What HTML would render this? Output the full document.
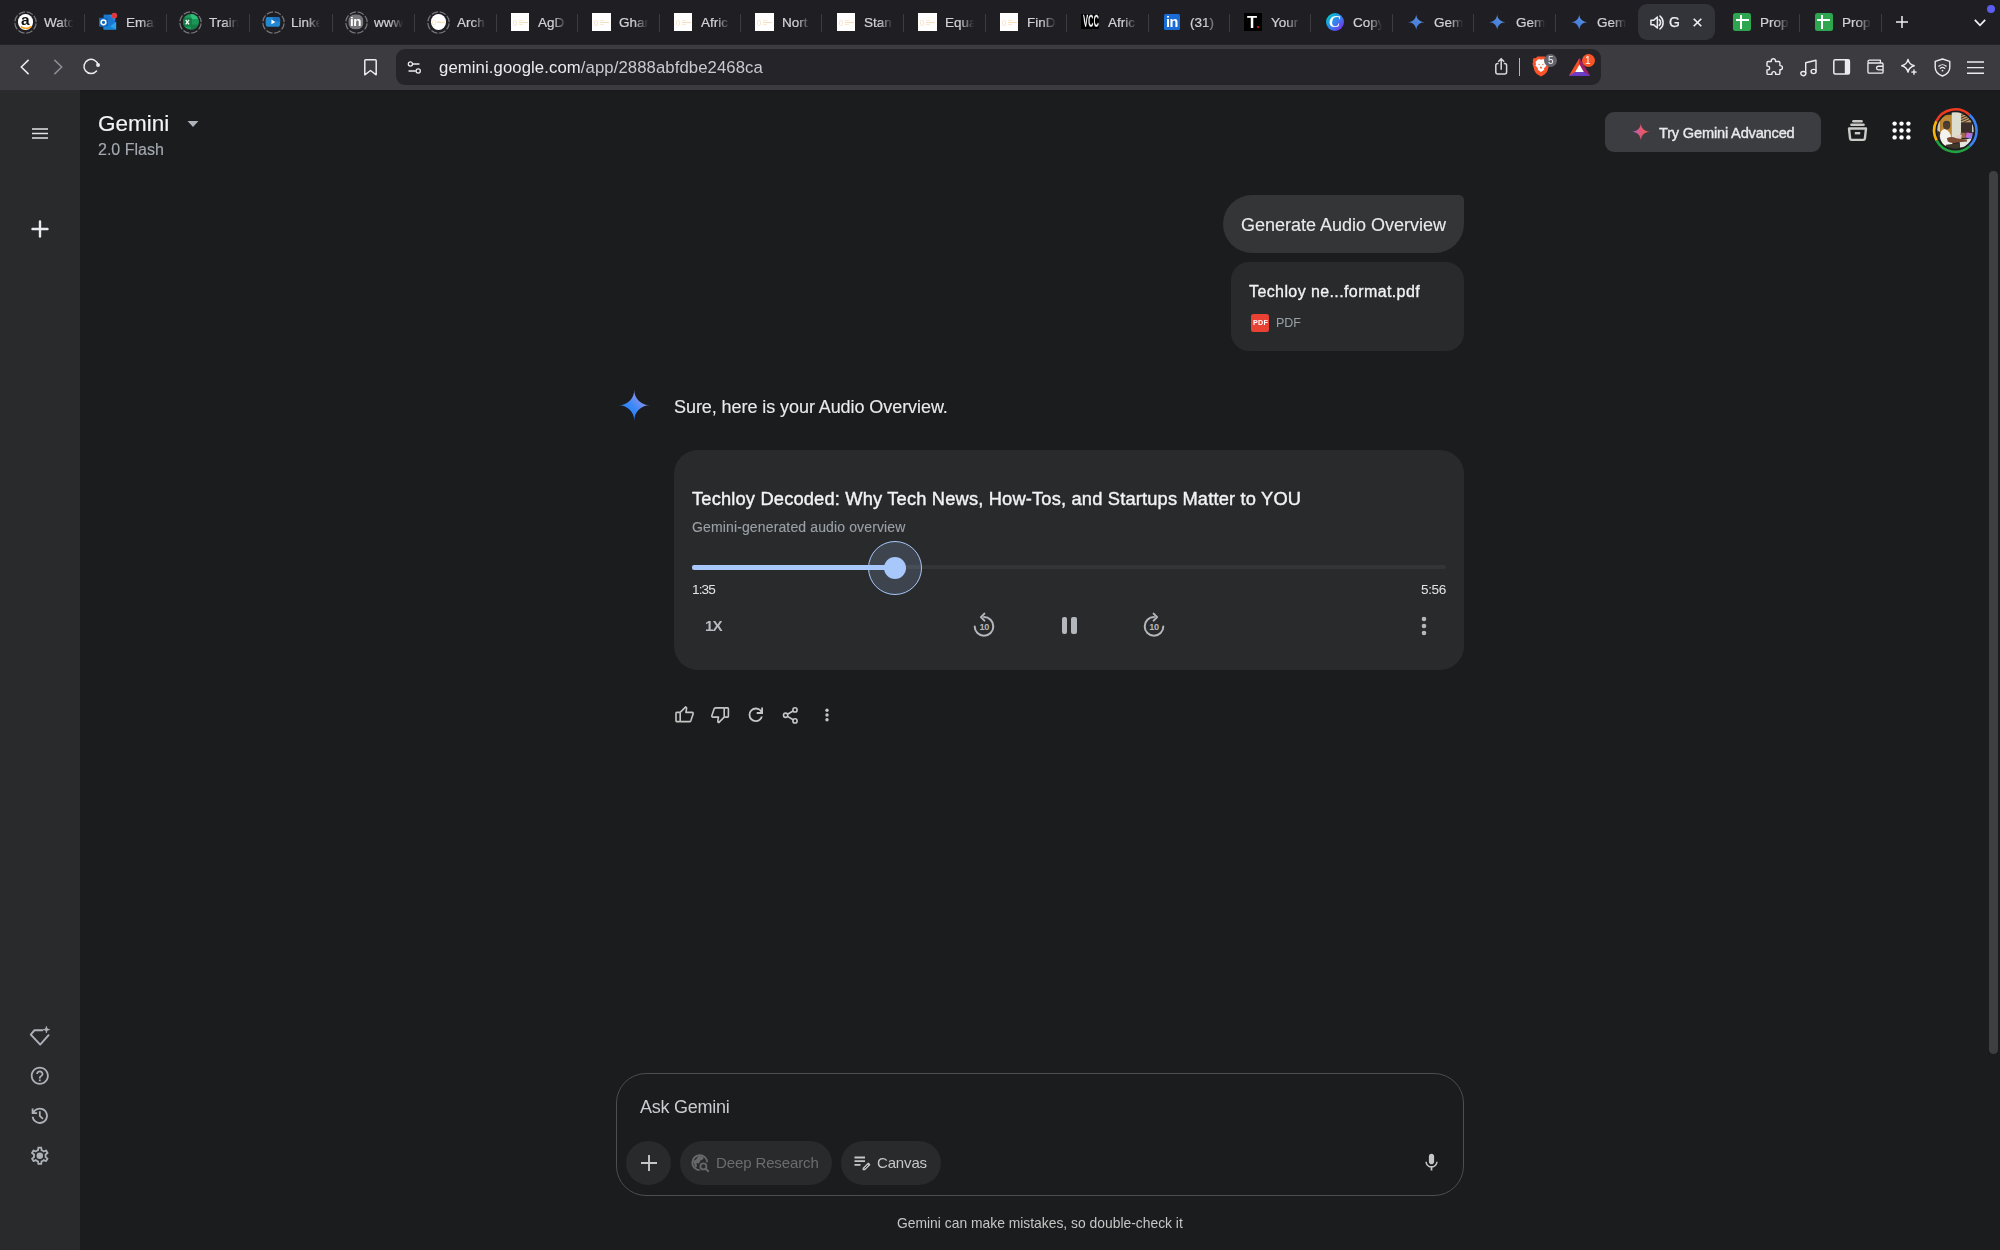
<!DOCTYPE html>
<html><head><meta charset="utf-8"><title>Gemini</title><style>
*{box-sizing:border-box;margin:0;padding:0}
html,body{width:2000px;height:1250px;overflow:hidden;background:#1b1c1d;font-family:"Liberation Sans",sans-serif;}
.abs{position:absolute}
.t{position:absolute;white-space:nowrap;line-height:1;will-change:transform}
#tabbar{position:absolute;left:0;top:0;width:2000px;height:45px;background:#1e1e23}
#toolbar{position:absolute;left:0;top:44px;width:2000px;height:46px;box-shadow:inset 0 0.7px 0 #1e1e23;background:#3b3b40}
#urlbar{position:absolute;left:396.2px;top:4.9px;width:1205.1px;height:36px;border-radius:9px;background:#242429}
.sep{position:absolute;top:14px;width:1.4px;height:17.6px;background:#3c3c43}
.tabtxt{will-change:transform;position:absolute;top:14.8px;font-size:13.5px;line-height:15px;color:#d2d2d6;-webkit-text-stroke:0.22px #d2d2d6;white-space:nowrap;overflow:hidden;width:29.5px;
 -webkit-mask-image:linear-gradient(90deg,#000 50%,transparent 98%);mask-image:linear-gradient(90deg,#000 50%,transparent 98%)}
.fav{position:absolute;top:14px;width:16px;height:16px}
.ring{position:absolute;top:11px;width:22px;height:22px;border-radius:50%;border:1.2px dashed #77777f}
#side{position:absolute;left:0;top:90px;width:80.300px;height:1160px;background:#282a2c}
svg{position:absolute;overflow:visible}
</style></head><body>
<div id="w" style="position:absolute;left:0;top:0;width:2000px;height:1250px;transform:translateZ(0)">
<!-- ===== GEMINI PAGE ===== -->
<div id="side"></div>
<div class="abs" style="left:80px;top:90px;width:1920px;height:2px;background:linear-gradient(180deg,rgba(0,0,0,.10),rgba(0,0,0,0))"></div>
<!-- sidebar top icons -->
<svg style="left:32px;top:127.500px" width="16" height="11" viewBox="0 0 16 11"><path d="M0 1H16M0 5.500H16M0 10H16" stroke="#e3e3e3" stroke-width="1.700"/></svg>
<svg style="left:32px;top:221px" width="16" height="16" viewBox="0 0 16 16"><path d="M8 0.500V15.500M0.500 8H15.500" stroke="#e8eaed" stroke-width="2.400" stroke-linecap="round"/></svg>
<!-- sidebar bottom icons -->
<svg style="left:29px;top:1025px" width="22" height="22" viewBox="0 0 22 22"><path d="M13.300 5.200H5.500L1.800 9.600L11.200 19.600L19.600 10.200" fill="none" stroke="#aeb2b8" stroke-width="1.900" stroke-linejoin="round" stroke-linecap="round"/><path d="M17.400 1.400C17.700 3.600 18.400 4.300 20.600 4.600C18.400 4.900 17.700 5.600 17.400 7.800C17.100 5.600 16.400 4.900 14.200 4.600C16.400 4.300 17.100 3.600 17.400 1.400Z" fill="#aeb2b8" stroke="#aeb2b8" stroke-width="0.900" stroke-linejoin="round"/></svg>
<svg style="left:29.400px;top:1065px" width="21.600" height="21.600" viewBox="0 0 24 24"><path fill="#aeb2b8" d="M11 18h2v-2h-2v2zm1-16C6.480 2 2 6.480 2 12s4.480 10 10 10 10-4.480 10-10S17.520 2 12 2zm0 18c-4.410 0-8-3.590-8-8s3.590-8 8-8 8 3.590 8 8-3.590 8-8 8zm0-14c-2.210 0-4 1.790-4 4h2c0-1.100.9-2 2-2s2 .9 2 2c0 2-3 1.750-3 5h2c0-2.250 3-2.500 3-5 0-2.210-1.790-4-4-4z"/></svg>
<svg style="left:29.400px;top:1105.200px" width="21.600" height="21.600" viewBox="0 0 24 24"><path fill="#aeb2b8" d="M12 21q-3.450 0-6.012-2.287T3.050 13H5.100q.35 2.600 2.313 4.300T12 19q2.925 0 4.963-2.037T19 12t-2.037-4.963T12 5q-1.725 0-3.225.800T6.250 8H9v2H3V4h2v2.350q1.275-1.600 3.113-2.475T12 3q1.875 0 3.513.713t2.850 1.924 1.925 2.850T21 12t-.712 3.513-1.925 2.850-2.850 1.925T12 21m2.800-4.800L11 12.400V7h2v4.600l3.200 3.200z"/></svg>
<svg style="left:29.200px;top:1145.200px" width="21.600" height="21.600" viewBox="0 0 24 24"><path fill="#aeb2b8" d="M19.430 12.980c.04-.32.07-.64.07-.98 0-.34-.03-.66-.07-.98l2.110-1.650c.19-.15.24-.42.12-.64l-2-3.460c-.09-.16-.26-.25-.44-.25-.06 0-.12.010-.17.030l-2.490 1c-.52-.4-1.080-.73-1.690-.98l-.38-2.650C14.460 2.180 14.250 2 14 2h-4c-.25 0-.46.180-.49.420l-.38 2.650c-.61.250-1.170.59-1.690.98l-2.490-1c-.06-.02-.12-.03-.18-.03-.17 0-.34.090-.43.250l-2 3.460c-.13.220-.07.49.12.640l2.110 1.650c-.04.320-.07.650-.07.980 0 .33.030.66.070.98l-2.110 1.650c-.19.150-.24.420-.12.640l2 3.460c.09.160.26.250.44.250.06 0 .12-.01.17-.03l2.490-1c.52.4 1.080.73 1.690.98l.38 2.650c.03.240.24.420.49.420h4c.25 0 .46-.18.490-.42l.38-2.650c.61-.25 1.170-.59 1.690-.98l2.490 1c.06.020.12.030.18.030.17 0 .34-.09.430-.25l2-3.460c.12-.22.07-.49-.12-.64l-2.110-1.650zm-1.980-1.710c.04.310.05.520.05.730 0 .21-.02.430-.05.730l-.14 1.130.89.700 1.080.84-.7 1.210-1.270-.51-1.040-.42-.9.680c-.43.320-.84.560-1.250.73l-1.060.43-.16 1.130-.2 1.350h-1.400l-.19-1.350-.16-1.130-1.060-.43c-.43-.18-.83-.41-1.230-.71l-.91-.7-1.060.43-1.270.51-.7-1.210 1.080-.84.890-.7-.14-1.130c-.03-.31-.05-.54-.05-.74s.02-.43.050-.73l.14-1.130-.89-.7-1.080-.84.700-1.210 1.270.51 1.040.42.900-.68c.43-.32.840-.56 1.250-.73l1.060-.43.16-1.130.2-1.350h1.390l.19 1.350.16 1.130 1.060.43c.43.180.83.410 1.230.71l.91.7 1.060-.43 1.270-.51.700 1.210-1.070.85-.89.700.14 1.130z"/><circle cx="12" cy="12" r="3.600" fill="#aeb2b8"/></svg>

<!-- header -->
<div class="t" id="h_gemini" style="-webkit-text-stroke:0.150px #f2f4f6;left:97.500px;top:113.200px;font-size:22.500px;color:#f2f4f6">Gemini</div>
<svg style="left:187px;top:120.800px" width="12" height="6" viewBox="0 0 12 6"><path d="M0.500 0H11.500L6 6Z" fill="#adb2bb"/></svg>
<div class="t" id="h_flash" style="left:98px;top:142.200px;font-size:16px;color:#a4a9b2;-webkit-text-stroke:0.150px #a4a9b2">2.0 Flash</div>

<div class="abs" style="left:1605px;top:111.500px;width:216.300px;height:40.300px;border-radius:9px;background:#3c3d41"></div>
<svg style="left:1631.600px;top:122.800px" width="17.600" height="17.600" viewBox="0 0 28 28"><defs><linearGradient id="advg" x1="0" y1="0.500" x2="1" y2="0.500"><stop offset="0" stop-color="#a66bd8"/><stop offset="0.450" stop-color="#e0567a"/><stop offset="1" stop-color="#f0604a"/></linearGradient></defs><path d="M14 28C14 26.063 13.627 24.243 12.880 22.540C12.157 20.837 11.165 19.355 9.905 18.095C8.645 16.835 7.163 15.843 5.460 15.120C3.757 14.373 1.937 14 0 14C1.937 14 3.757 13.638 5.460 12.915C7.163 12.168 8.645 11.165 9.905 9.905C11.165 8.645 12.157 7.163 12.880 5.460C13.627 3.757 14 1.937 14 0C14 1.937 14.362 3.757 15.085 5.460C15.832 7.163 16.835 8.645 18.095 9.905C19.355 11.165 20.837 12.168 22.540 12.915C24.243 13.638 26.063 14 28 14C26.063 14 24.243 14.373 22.540 15.120C20.837 15.843 19.355 16.835 18.095 18.095C16.835 19.355 15.832 20.837 15.085 22.540C14.362 24.243 14 26.063 14 28Z" fill="url(#advg)"/></svg>
<div class="t" id="h_adv" style="left:1658.500px;top:125.500px;font-size:14.600px;letter-spacing:-0.180px;color:#e8eaed;-webkit-text-stroke:0.380px #e8eaed">Try Gemini Advanced</div>

<!-- gem manager icon -->
<svg style="left:1846.500px;top:119.500px" width="21" height="22" viewBox="0 0 21 22"><g stroke="#cacac6" stroke-width="2.400" fill="none" stroke-linejoin="round"><path d="M6.400 1.300H14.600" stroke-linecap="round"/><path d="M4.400 4.800H16.600" stroke-linecap="round"/><path d="M2 8.500H19L17.900 18.500a1.600 1.600 0 0 1-1.600 1.400H4.700a1.600 1.600 0 0 1-1.600-1.400Z"/><path d="M7.800 13.200H13.200"/></g></svg>
<!-- apps -->
<svg style="left:1892px;top:121.300px" width="19" height="19" viewBox="0 0 19 19"><g fill="#fff"><circle cx="2.600" cy="2.600" r="2.200"/><circle cx="9.500" cy="2.600" r="2.200"/><circle cx="16.400" cy="2.600" r="2.200"/><circle cx="2.600" cy="9.500" r="2.200"/><circle cx="9.500" cy="9.500" r="2.200"/><circle cx="16.400" cy="9.500" r="2.200"/><circle cx="2.600" cy="16.400" r="2.200"/><circle cx="9.500" cy="16.400" r="2.200"/><circle cx="16.400" cy="16.400" r="2.200"/></g></svg>
<!-- avatar -->
<svg style="left:1920px;top:100px" width="70" height="65" viewBox="0 0 1346 1250">
<defs><clipPath id="avc"><circle cx="680" cy="588" r="352"/></clipPath><filter id="avb" x="-5%" y="-5%" width="110%" height="110%"><feGaussianBlur stdDeviation="7"/></filter>
<linearGradient id="avl" x1="0" y1="0" x2="1" y2="1"><stop offset="0" stop-color="#ff5aa8"/><stop offset="0.5" stop-color="#b070e8"/><stop offset="1" stop-color="#58a0f0"/></linearGradient></defs>
<g fill="none" stroke-width="50">
<path d="M314.200 407.200A408 408 0 0 1 949.800 282" stroke="#ee3a22"/>
<path d="M949.800 282A408 408 0 0 1 951.900 892.200" stroke="#3d82f4"/>
<path d="M951.900 892.200A408 408 0 0 1 317.800 775.800" stroke="#23a341"/>
<path d="M317.800 775.800A408 408 0 0 1 314.200 407.200" stroke="#fbb506"/>
</g>
<g clip-path="url(#avc)"><g filter="url(#avb)">
<rect x="300" y="200" width="780" height="780" fill="#2b2622"/>
<rect x="330" y="400" width="60" height="220" fill="#c8c8c0"/>
<rect x="385" y="285" width="230" height="450" fill="#b5802c"/>
<rect x="415" y="320" width="170" height="380" fill="#c08a34"/>
<rect x="610" y="225" width="185" height="560" fill="#dcdccf"/>
<rect x="790" y="240" width="200" height="200" fill="#c6a270"/>
<path d="M790 300L900 250M790 350L960 275M790 400L985 315M830 430L990 362" stroke="#4a3826" stroke-width="20"/>
<rect x="790" y="430" width="225" height="200" fill="#3a2f29"/>
<rect x="1000" y="470" width="40" height="150" fill="#c9c9c9"/>
<path d="M760 770L1000 740L960 900L770 915Z" fill="#e6e4e0"/>
<path d="M895 625L1015 640L995 755L880 720Z" fill="url(#avl)"/>
<rect x="780" y="630" width="100" height="100" fill="#9a6a50"/>
<path d="M700 680L800 670L800 720L700 720Z" fill="#e8c8c8"/>
<path d="M330 580Q420 620 470 780L520 900L330 900Z" fill="#3a312b"/>
<ellipse cx="512" cy="485" rx="70" ry="82" fill="#4f3d32"/>
<path d="M442 470Q450 400 512 400Q575 400 582 460Q540 430 490 440Q460 450 442 470Z" fill="#3c3a38"/>
<path d="M380 690Q395 570 470 558Q545 575 585 660L625 850L470 885Q395 800 380 690Z" fill="#f3f3ef"/>
<path d="M515 735Q600 690 700 735L905 765L905 800L700 815Q590 840 535 800Z" fill="#7c4a32"/>
<path d="M500 860L760 830L770 930L520 940Z" fill="#40342c"/>
</g></g></svg>
<!-- scrollbar -->
<div class="abs" style="left:1989px;top:170.800px;width:8.800px;height:883.200px;border-radius:4.400px;background:#3e3f42"></div>

<!-- user bubble -->
<div class="abs" style="left:1223px;top:195px;width:241px;height:58px;border-radius:29px 5px 29px 29px;background:#333537"></div>
<div class="t" id="u_gen" style="-webkit-text-stroke:0.130px #e8eaed;left:1241px;top:215.500px;font-size:18px;color:#e8eaed">Generate Audio Overview</div>
<!-- file chip -->
<div class="abs" style="left:1231px;top:262px;width:233px;height:89px;border-radius:18px;background:#282a2c"></div>
<div class="t" id="u_file" style="left:1249px;top:283.600px;font-size:16px;letter-spacing:0.400px;color:#f1f3f4;-webkit-text-stroke:0.330px #f1f3f4">Techloy ne...format.pdf</div>
<div class="abs" style="left:1251px;top:313.500px;width:18px;height:18px;border-radius:2.500px;background:#e94235"></div>
<div class="t" style="left:1253.200px;top:319.300px;font-size:7.200px;font-weight:bold;color:#fff;letter-spacing:0.250px">PDF</div>
<div class="t" id="u_pdf" style="left:1276px;top:316.800px;font-size:12.500px;color:#9aa0a6">PDF</div>

<!-- gemini response -->
<svg style="left:618.700px;top:389.800px" width="30.500" height="30.500" viewBox="0 0 28 28"><defs><linearGradient id="gsp" x1="0.120" y1="0.880" x2="0.880" y2="0.120"><stop offset="0" stop-color="#1f7cfb"/><stop offset="0.450" stop-color="#3a8af9"/><stop offset="0.750" stop-color="#7f8ff0"/><stop offset="1" stop-color="#b08ae8"/></linearGradient></defs><path d="M14 28C14 26.063 13.627 24.243 12.880 22.540C12.157 20.837 11.165 19.355 9.905 18.095C8.645 16.835 7.163 15.843 5.460 15.120C3.757 14.373 1.937 14 0 14C1.937 14 3.757 13.638 5.460 12.915C7.163 12.168 8.645 11.165 9.905 9.905C11.165 8.645 12.157 7.163 12.880 5.460C13.627 3.757 14 1.937 14 0C14 1.937 14.362 3.757 15.085 5.460C15.832 7.163 16.835 8.645 18.095 9.905C19.355 11.165 20.837 12.168 22.540 12.915C24.243 13.638 26.063 14 28 14C26.063 14 24.243 14.373 22.540 15.120C20.837 15.843 19.355 16.835 18.095 18.095C16.835 19.355 15.832 20.837 15.085 22.540C14.362 24.243 14 26.063 14 28Z" fill="url(#gsp)"/></svg>
<div class="t" id="r_sure" style="-webkit-text-stroke:0.130px #e8eaed;left:674px;top:398.100px;font-size:18px;letter-spacing:-0.070px;color:#e8eaed">Sure, here is your Audio Overview.</div>

<!-- audio card -->
<div class="abs" style="left:674px;top:450px;width:790px;height:220px;border-radius:24px;background:#282a2c"></div>
<div class="t" id="c_title" style="left:692px;top:490.400px;font-size:18.300px;letter-spacing:0.170px;color:#f1f3f4;-webkit-text-stroke:0.400px #f1f3f4">Techloy Decoded: Why Tech News, How-Tos, and Startups Matter to YOU</div>
<div class="t" id="c_sub" style="-webkit-text-stroke:0.120px #9aa0a6;left:692px;top:520px;font-size:14px;letter-spacing:0.135px;color:#9aa0a6">Gemini-generated audio overview</div>
<div class="abs" style="left:692px;top:565px;width:754px;height:4px;border-radius:2px;background:#333537"></div>
<div class="abs" style="left:692px;top:565px;width:203px;height:4.500px;border-radius:2px;background:#a8c7fa"></div>
<div class="abs" style="left:868.100px;top:540.500px;width:54.200px;height:54.200px;border-radius:50%;background:rgba(168,199,250,0.170);border:1.200px solid #a8c7fa"></div>
<div class="abs" style="left:884.100px;top:556.500px;width:22.200px;height:22.200px;border-radius:50%;background:#a8c7fa"></div>
<div class="t" id="c_t1" style="left:692px;top:582.800px;font-size:13.600px;letter-spacing:-0.870px;color:#e3e3e3">1:35</div>
<div class="t" id="c_t2" style="left:1420.700px;top:582.800px;font-size:13.600px;letter-spacing:-0.370px;color:#e3e3e3">5:56</div>
<div class="t" id="c_1x" style="left:704.700px;top:618.200px;font-size:15.200px;font-weight:bold;letter-spacing:-0.850px;color:#b8bcc2">1X</div>
<!-- replay 10 -->
<svg style="left:972.400px;top:612.200px" width="24" height="26" viewBox="0 0 24 26"><path d="M12 5.100A9.300 9.300 0 1 1 2.700 14.400" fill="none" stroke="#b4b8bd" stroke-width="2" stroke-linecap="round"/><path d="M12.400 1.600L8.900 5.100L12.400 8.600" fill="none" stroke="#b4b8bd" stroke-width="2" stroke-linejoin="round" stroke-linecap="round"/><text x="12.300" y="18" font-family="Liberation Sans, sans-serif" font-size="9.200" font-weight="bold" fill="#b4b8bd" text-anchor="middle" letter-spacing="-0.4">10</text></svg>
<!-- pause -->
<div class="abs" style="left:1061.500px;top:617px;width:5.500px;height:17px;border-radius:2px;background:#b4b8bd"></div>
<div class="abs" style="left:1071px;top:617px;width:5.500px;height:17px;border-radius:2px;background:#b4b8bd"></div>
<!-- forward 10 -->
<svg style="left:1141.600px;top:612.200px" width="24" height="26" viewBox="0 0 24 26"><path d="M12 5.100A9.300 9.300 0 1 0 21.300 14.400" fill="none" stroke="#b4b8bd" stroke-width="2" stroke-linecap="round"/><path d="M11.600 1.600L15.100 5.100L11.600 8.600" fill="none" stroke="#b4b8bd" stroke-width="2" stroke-linejoin="round" stroke-linecap="round"/><text x="11.900" y="18" font-family="Liberation Sans, sans-serif" font-size="9.200" font-weight="bold" fill="#b4b8bd" text-anchor="middle" letter-spacing="-0.4">10</text></svg>
<!-- more -->
<svg style="left:1421px;top:615.800px" width="6" height="20" viewBox="0 0 6 20"><g fill="#b4b8bd"><circle cx="3" cy="3" r="2.300"/><circle cx="3" cy="10" r="2.300"/><circle cx="3" cy="17" r="2.300"/></g></svg>

<!-- action row -->
<svg style="left:674.500px;top:706.300px" width="20" height="17" viewBox="0 0 20 17"><g fill="none" stroke="#c4c7c5" stroke-width="1.600" stroke-linejoin="round"><rect x="1" y="6.400" width="4.200" height="9.200" rx="0.800"/><path d="M5.200 6.400L10.700 0.900Q11.900 1.300 11.600 2.700L10.900 6.400H17.200Q18.500 6.600 18.100 7.900L15.900 14.600Q15.500 15.600 14.500 15.600H5.200"/></g></svg>
<svg style="left:710.700px;top:707.200px" width="20" height="17" viewBox="0 0 20 17"><g fill="none" stroke="#c4c7c5" stroke-width="1.600" stroke-linejoin="round"><rect x="13.200" y="0.900" width="4.200" height="9.200" rx="0.800"/><path d="M13.200 10.100L7.700 15.600Q6.500 15.200 6.800 13.800L7.500 10.100H1.800Q0.500 9.900 0.900 8.600L3.100 1.900Q3.500 0.900 4.500 0.900H13.200"/></g></svg>
<svg style="left:744.600px;top:704.100px" width="21.600" height="21.600" viewBox="0 0 24 24"><path fill="#c4c7c5" d="M12 20q-3.350 0-5.675-2.325T4 12t2.325-5.675T12 4q1.725 0 3.300.712T18 6.750V4h2v7h-7V9h4.200q-.8-1.400-2.187-2.200T12 6Q9.500 6 7.750 7.750T6 12t1.750 4.250T12 18q1.925 0 3.475-1.100T17.650 14h2.100q-.7 2.650-2.850 4.325T12 20"/></svg>
<svg style="left:782px;top:705.500px" width="18" height="19" viewBox="0 0 18 19"><g fill="none" stroke="#c4c7c5" stroke-width="1.600"><circle cx="13" cy="3.900" r="2.100"/><circle cx="3.600" cy="9.250" r="2.100"/><circle cx="13" cy="14.900" r="2.100"/><path d="M5.500 8.200L11.100 5M5.500 10.400L11.100 13.700"/></g></svg>
<svg style="left:824.900px;top:707.800px" width="4" height="14" viewBox="0 0 4 14"><g fill="#c4c7c5"><circle cx="2" cy="2.200" r="1.700"/><circle cx="2" cy="7" r="1.700"/><circle cx="2" cy="11.800" r="1.700"/></g></svg>

<!-- input box -->
<div class="abs" style="left:616px;top:1073px;width:848.200px;height:122.700px;border-radius:30px;border:1.300px solid #4b4e52;background:#1b1c1d"></div>
<div class="t" id="i_ask" style="left:639.500px;top:1097.500px;font-size:18px;letter-spacing:-0.250px;color:#c8ccd0">Ask Gemini</div>
<div class="abs" style="left:626.300px;top:1140.800px;width:44.500px;height:44.500px;border-radius:50%;background:#282a2c"></div>
<svg style="left:640.500px;top:1155px" width="16" height="16" viewBox="0 0 16 16"><path d="M8 0V16M0 8H16" stroke="#c4c7c5" stroke-width="1.900"/></svg>
<div class="abs" style="left:679.600px;top:1140.800px;width:152.500px;height:44.500px;border-radius:22px;background:#282a2c"></div>
<svg style="left:690.500px;top:1153.500px" width="19" height="19" viewBox="0 0 19 19"><path d="M8.600 16.200A7.500 7.500 0 1 1 16.300 8.200" fill="none" stroke="#66686b" stroke-width="1.900"/><path d="M2 7L5 5.500L7.500 2L12 2.500L12.500 5L9.500 6.500L8 9.500L5.500 9L6 12.500L4.500 14Z" fill="#66686b"/><circle cx="12.400" cy="12.400" r="3" fill="none" stroke="#66686b" stroke-width="1.800"/><path d="M14.700 14.700L17.800 17.800" stroke="#66686b" stroke-width="2"/></svg>
<div class="t" id="i_deep" style="left:716px;top:1155px;font-size:15px;letter-spacing:-0.120px;color:#6b6c6f">Deep Research</div>
<div class="abs" style="left:841px;top:1140.800px;width:100.300px;height:44.500px;border-radius:22px;background:#282a2c"></div>
<svg style="left:853.500px;top:1155.500px" width="17" height="15" viewBox="0 0 17 15"><path d="M0.500 1.500H11M0.500 5.200H11M0.500 8.900H6.500" stroke="#c4c7c5" stroke-width="1.800"/><path d="M8.600 14.300V11.900L13.600 6.900Q14.300 6.300 15 6.900L16 7.900Q16.600 8.600 16 9.300L11 14.300Z" fill="#c4c7c5"/><path d="M10.400 12.500L14 8.900" stroke="#282a2c" stroke-width="1"/></svg>
<div class="t" id="i_canvas" style="left:877px;top:1155px;font-size:15px;letter-spacing:-0.150px;color:#c4c7c5">Canvas</div>
<svg style="left:1421.300px;top:1152px" width="21" height="21" viewBox="0 0 24 24"><path fill="#c4c7c5" d="M12 14c1.660 0 2.990-1.340 2.990-3L15 5c0-1.660-1.340-3-3-3S9 3.340 9 5v6c0 1.660 1.340 3 3 3zm5.300-3c0 3-2.540 5.100-5.300 5.100S6.700 14 6.700 11H5c0 3.410 2.720 6.230 6 6.720V21h2v-3.280c3.280-.48 6-3.300 6-6.720h-1.700z"/></svg>
<div class="t" id="f_note" style="left:897px;top:1216.800px;font-size:13.860px;color:#c4c7c5">Gemini can make mistakes, so double-check it</div>

<div id="tabbar">
<svg width="0" height="0"><defs><linearGradient id="gemg" x1="0" y1="1" x2="1" y2="0"><stop offset="0" stop-color="#4a72d8"/><stop offset="0.55" stop-color="#4b86dc"/><stop offset="1" stop-color="#7fa4e6"/></linearGradient></defs></svg>
<svg style="left:14.1px;top:10.7px" width="23" height="23" viewBox="0 0 23 23"><circle cx="11.5" cy="11.5" r="10.7" fill="none" stroke="#75757a" stroke-width="1.25" stroke-dasharray="6.7 1.704" transform="rotate(4.6 11.5 11.5)"/></svg><div class="abs" style="left:17.7px;top:14.3px;width:15.8px;height:15.8px;border-radius:50%;background:#fff"></div><div class="t" style="left:21.2px;top:12.3px;font-size:15.5px;font-weight:bold;color:#111">a</div><svg style="left:19.6px;top:25.6px" width="12" height="4" viewBox="0 0 12 4"><path d="M0.8 0.6 Q6 4.2 11.2 0.6" stroke="#f90" stroke-width="1.4" fill="none"/></svg>
<div class="tabtxt" style="left:43.5px">Watc</div>
<div class="sep" style="left:83.7px"></div>
<svg style="left:98.0px;top:12.3px" width="20" height="20" viewBox="0 0 20 20"><rect x="5.6" y="2.6" width="11.6" height="13" fill="#1a78d0"/><path d="M11 3 L17.2 3 L17.2 9 Z" fill="#2b94e8"/><path d="M5.6 10.5 L11.5 15 L18.2 9.6 V17.6 H5.6Z" fill="#2aa3ec"/><path d="M5.600 11 L18.200 17.600 H5.600Z" fill="#1784d8"/><rect x="1" y="5.800" width="9" height="9" rx="0.800" fill="#1068c0"/><circle cx="5.500" cy="10.300" r="2.400" fill="none" stroke="#fff" stroke-width="1.500"/><circle cx="16.300" cy="3.600" r="2.900" fill="#dc3a3e"/></svg>
<div class="tabtxt" style="left:125.9px">Emai</div>
<div class="sep" style="left:165.5px"></div>
<svg style="left:179.3px;top:10.7px" width="23" height="23" viewBox="0 0 23 23"><circle cx="11.5" cy="11.5" r="10.7" fill="none" stroke="#75757a" stroke-width="1.25" stroke-dasharray="6.7 1.704" transform="rotate(4.6 11.5 11.5)"/></svg><svg style="left:182.9px;top:14.3px" width="15.8" height="15.8" viewBox="0 0 17 17"><defs><clipPath id="exc"><circle cx="8.5" cy="8.5" r="8.5"/></clipPath></defs><g clip-path="url(#exc)"><rect width="17" height="17" fill="#1e9c5c"/><rect x="8.5" width="9" height="5.6" fill="#2fbf7a"/><rect x="8.5" y="5.600" width="9" height="5.800" fill="#1a9556"/><rect x="8.5" y="11.400" width="9" height="5.600" fill="#157a45"/><rect x="0" y="4" width="9.500" height="9.500" fill="#127c43"/></g><path d="M2.900 6.300 L6.500 11.200 M6.500 6.300 L2.900 11.200" stroke="#fff" stroke-width="1.400"/></svg>
<div class="tabtxt" style="left:208.7px">Train</div>
<div class="sep" style="left:248.5px"></div>
<svg style="left:261.5px;top:10.7px" width="23" height="23" viewBox="0 0 23 23"><circle cx="11.5" cy="11.5" r="10.7" fill="none" stroke="#75757a" stroke-width="1.25" stroke-dasharray="6.7 1.704" transform="rotate(4.6 11.5 11.5)"/></svg><svg style="left:265.1px;top:14.3px" width="15.8" height="15.8" viewBox="0 0 17 17"><defs><clipPath id="vdc"><circle cx="8.5" cy="8.5" r="8.5"/></clipPath></defs><g clip-path="url(#vdc)"><rect x="0.600" y="3.200" width="15.800" height="10.600" rx="1.600" fill="#2388d2"/><rect x="8.500" y="3.200" width="7.900" height="5" fill="#1f6fc0"/></g><path d="M6.900 6 L11.200 8.500 L6.900 11Z" fill="#fff"/></svg>
<div class="tabtxt" style="left:290.9px">Linke</div>
<div class="sep" style="left:331.5px"></div>
<svg style="left:344.5px;top:10.7px" width="23" height="23" viewBox="0 0 23 23"><circle cx="11.5" cy="11.5" r="10.7" fill="none" stroke="#75757a" stroke-width="1.25" stroke-dasharray="6.7 1.704" transform="rotate(4.6 11.5 11.5)"/></svg><svg style="left:348.1px;top:14.3px" width="15.8" height="15.8" viewBox="0 0 17 17"><defs><clipPath id="lgc"><circle cx="8.5" cy="8.5" r="8.5"/></clipPath></defs><g clip-path="url(#lgc)"><rect x="0.500" y="0.500" width="16" height="16" rx="2.500" fill="#77777b"/></g></svg><div class="t" style="left:350.2px;top:15.2px;font-size:13.5px;font-weight:bold;color:#fff;letter-spacing:-0.5px">in</div>
<div class="tabtxt" style="left:373.9px">www</div>
<div class="sep" style="left:413.9px"></div>
<svg style="left:427.1px;top:10.7px" width="23" height="23" viewBox="0 0 23 23"><circle cx="11.5" cy="11.5" r="10.7" fill="none" stroke="#75757a" stroke-width="1.25" stroke-dasharray="6.7 1.704" transform="rotate(4.6 11.5 11.5)"/></svg><div class="abs" style="left:430.7px;top:14.3px;width:15.8px;height:15.8px;border-radius:50%;background:#fff"></div><div class="abs" style="left:436.6px;top:20.500px;width:4px;height:1px;background:#fbe9d2"></div><div class="abs" style="left:436.6px;top:22.100px;width:8.500px;height:1px;background:#f8ddb8"></div><div class="abs" style="left:432.1px;top:19.800px;width:3.500px;height:5.500px;border:1px solid #fbe6cc;border-radius:1.500px"></div>
<div class="tabtxt" style="left:456.5px">Arch</div>
<div class="sep" style="left:495.5px"></div>
<div class="abs" style="left:510.8px;top:12.8px;width:18.4px;height:18.6px;background:#fff"></div><div class="abs" style="left:518.5px;top:20.3px;width:4px;height:1px;background:#fbe9d2"></div><div class="abs" style="left:518.5px;top:22px;width:9.500px;height:1px;background:#f8ddb8"></div><div class="abs" style="left:518.5px;top:23.700px;width:4px;height:1px;background:#fbe9d2"></div><div class="abs" style="left:512.5px;top:19.500px;width:4px;height:6px;border:1px solid #fbe6cc;border-radius:1.500px 2px 2px 1.500px"></div>
<div class="tabtxt" style="left:537.9px">AgD</div>
<div class="sep" style="left:576.9px"></div>
<div class="abs" style="left:592.2px;top:12.8px;width:18.4px;height:18.6px;background:#fff"></div><div class="abs" style="left:599.9px;top:20.3px;width:4px;height:1px;background:#fbe9d2"></div><div class="abs" style="left:599.9px;top:22px;width:9.500px;height:1px;background:#f8ddb8"></div><div class="abs" style="left:599.9px;top:23.700px;width:4px;height:1px;background:#fbe9d2"></div><div class="abs" style="left:593.9px;top:19.500px;width:4px;height:6px;border:1px solid #fbe6cc;border-radius:1.500px 2px 2px 1.500px"></div>
<div class="tabtxt" style="left:619.3px">Ghar</div>
<div class="sep" style="left:658.5px"></div>
<div class="abs" style="left:673.8px;top:12.8px;width:18.4px;height:18.6px;background:#fff"></div><div class="abs" style="left:681.5px;top:20.3px;width:4px;height:1px;background:#fbe9d2"></div><div class="abs" style="left:681.5px;top:22px;width:9.500px;height:1px;background:#f8ddb8"></div><div class="abs" style="left:681.5px;top:23.700px;width:4px;height:1px;background:#fbe9d2"></div><div class="abs" style="left:675.5px;top:19.500px;width:4px;height:6px;border:1px solid #fbe6cc;border-radius:1.500px 2px 2px 1.500px"></div>
<div class="tabtxt" style="left:700.9px">Afric</div>
<div class="sep" style="left:739.9px"></div>
<div class="abs" style="left:755.2px;top:12.8px;width:18.4px;height:18.6px;background:#fff"></div><div class="abs" style="left:762.9px;top:20.3px;width:4px;height:1px;background:#fbe9d2"></div><div class="abs" style="left:762.9px;top:22px;width:9.500px;height:1px;background:#f8ddb8"></div><div class="abs" style="left:762.9px;top:23.700px;width:4px;height:1px;background:#fbe9d2"></div><div class="abs" style="left:756.9px;top:19.500px;width:4px;height:6px;border:1px solid #fbe6cc;border-radius:1.500px 2px 2px 1.500px"></div>
<div class="tabtxt" style="left:782.3px">Nort</div>
<div class="sep" style="left:821.1px"></div>
<div class="abs" style="left:836.8px;top:12.8px;width:18.4px;height:18.6px;background:#fff"></div><div class="abs" style="left:844.5px;top:20.3px;width:4px;height:1px;background:#fbe9d2"></div><div class="abs" style="left:844.5px;top:22px;width:9.500px;height:1px;background:#f8ddb8"></div><div class="abs" style="left:844.5px;top:23.700px;width:4px;height:1px;background:#fbe9d2"></div><div class="abs" style="left:838.5px;top:19.500px;width:4px;height:6px;border:1px solid #fbe6cc;border-radius:1.500px 2px 2px 1.500px"></div>
<div class="tabtxt" style="left:863.9px">Stan</div>
<div class="sep" style="left:902.9px"></div>
<div class="abs" style="left:918.2px;top:12.8px;width:18.4px;height:18.6px;background:#fff"></div><div class="abs" style="left:925.9px;top:20.3px;width:4px;height:1px;background:#fbe9d2"></div><div class="abs" style="left:925.9px;top:22px;width:9.500px;height:1px;background:#f8ddb8"></div><div class="abs" style="left:925.9px;top:23.700px;width:4px;height:1px;background:#fbe9d2"></div><div class="abs" style="left:919.9px;top:19.500px;width:4px;height:6px;border:1px solid #fbe6cc;border-radius:1.500px 2px 2px 1.500px"></div>
<div class="tabtxt" style="left:945.3px">Equa</div>
<div class="sep" style="left:984.5px"></div>
<div class="abs" style="left:999.8px;top:12.8px;width:18.4px;height:18.6px;background:#fff"></div><div class="abs" style="left:1007.5px;top:20.3px;width:4px;height:1px;background:#fbe9d2"></div><div class="abs" style="left:1007.5px;top:22px;width:9.500px;height:1px;background:#f8ddb8"></div><div class="abs" style="left:1007.5px;top:23.700px;width:4px;height:1px;background:#fbe9d2"></div><div class="abs" style="left:1001.5px;top:19.500px;width:4px;height:6px;border:1px solid #fbe6cc;border-radius:1.500px 2px 2px 1.500px"></div>
<div class="tabtxt" style="left:1026.9px">FinD</div>
<div class="sep" style="left:1065.9px"></div>
<div class="abs" style="left:1081.4px;top:14.4px;width:17.8px;height:14.6px;background:#000"></div><div class="t" style="left:1082.6px;top:14.1px;font-size:12.5px;font-weight:bold;color:#fff;transform:scale(0.6,1.26);transform-origin:0 0;letter-spacing:0.1px">VCC</div>
<div class="tabtxt" style="left:1108.3px">Afric</div>
<div class="sep" style="left:1147.5px"></div>
<div class="abs" style="left:1163.9px;top:14.4px;width:15.8px;height:15.6px;border-radius:1.5px;background:#1a6cd6"></div><div class="t" style="left:1165.8px;top:15.3px;font-size:14.5px;font-weight:bold;color:#fff;letter-spacing:-0.5px">in</div>
<div class="tabtxt" style="left:1189.7px">(31)</div>
<div class="sep" style="left:1228.9px"></div>
<div class="abs" style="left:1244.0px;top:13px;width:18px;height:18px;background:#000"></div><div class="t" style="left:1247.1px;top:13.9px;font-size:16.5px;font-weight:bold;color:#fff">T</div><div class="abs" style="left:1256.6px;top:25.600px;width:2.800px;height:2.800px;border-radius:50%;background:#f01818"></div>
<div class="tabtxt" style="left:1270.9px">Your</div>
<div class="sep" style="left:1310.1px"></div>
<div class="abs" style="left:1325.6px;top:13px;width:18px;height:18px;border-radius:50%;background:linear-gradient(135deg,#00c4cc 12%,#3a7df0 55%,#7d2ae8 92%)"></div><div class="t" style="left:1329.0px;top:13.8px;font-size:16.5px;font-style:italic;font-weight:bold;font-family:'Liberation Serif',serif;color:#fff">C</div>
<div class="tabtxt" style="left:1352.5px">Copy</div>
<div class="sep" style="left:1391.5px"></div>
<svg style="left:1407.8px;top:13.8px" width="16.400" height="16.400" viewBox="0 0 28 28"><path d="M14 28C14 26.063 13.627 24.243 12.880 22.540C12.157 20.837 11.165 19.355 9.905 18.095C8.645 16.835 7.163 15.843 5.460 15.120C3.757 14.373 1.937 14 0 14C1.937 14 3.757 13.638 5.460 12.915C7.163 12.168 8.645 11.165 9.905 9.905C11.165 8.645 12.157 7.163 12.880 5.460C13.627 3.757 14 1.937 14 0C14 1.937 14.362 3.757 15.085 5.460C15.832 7.163 16.835 8.645 18.095 9.905C19.355 11.165 20.837 12.168 22.540 12.915C24.243 13.638 26.063 14 28 14C26.063 14 24.243 14.373 22.540 15.120C20.837 15.843 19.355 16.835 18.095 18.095C16.835 19.355 15.832 20.837 15.085 22.540C14.362 24.243 14 26.063 14 28Z" fill="url(#gemg)"/></svg>
<div class="tabtxt" style="left:1433.9px">Gem</div>
<div class="sep" style="left:1473.1px"></div>
<svg style="left:1489.4px;top:13.8px" width="16.400" height="16.400" viewBox="0 0 28 28"><path d="M14 28C14 26.063 13.627 24.243 12.880 22.540C12.157 20.837 11.165 19.355 9.905 18.095C8.645 16.835 7.163 15.843 5.460 15.120C3.757 14.373 1.937 14 0 14C1.937 14 3.757 13.638 5.460 12.915C7.163 12.168 8.645 11.165 9.905 9.905C11.165 8.645 12.157 7.163 12.880 5.460C13.627 3.757 14 1.937 14 0C14 1.937 14.362 3.757 15.085 5.460C15.832 7.163 16.835 8.645 18.095 9.905C19.355 11.165 20.837 12.168 22.540 12.915C24.243 13.638 26.063 14 28 14C26.063 14 24.243 14.373 22.540 15.120C20.837 15.843 19.355 16.835 18.095 18.095C16.835 19.355 15.832 20.837 15.085 22.540C14.362 24.243 14 26.063 14 28Z" fill="url(#gemg)"/></svg>
<div class="tabtxt" style="left:1515.5px">Gem</div>
<div class="sep" style="left:1554.7px"></div>
<svg style="left:1570.8px;top:13.8px" width="16.400" height="16.400" viewBox="0 0 28 28"><path d="M14 28C14 26.063 13.627 24.243 12.880 22.540C12.157 20.837 11.165 19.355 9.905 18.095C8.645 16.835 7.163 15.843 5.460 15.120C3.757 14.373 1.937 14 0 14C1.937 14 3.757 13.638 5.460 12.915C7.163 12.168 8.645 11.165 9.905 9.905C11.165 8.645 12.157 7.163 12.880 5.460C13.627 3.757 14 1.937 14 0C14 1.937 14.362 3.757 15.085 5.460C15.832 7.163 16.835 8.645 18.095 9.905C19.355 11.165 20.837 12.168 22.540 12.915C24.243 13.638 26.063 14 28 14C26.063 14 24.243 14.373 22.540 15.120C20.837 15.843 19.355 16.835 18.095 18.095C16.835 19.355 15.832 20.837 15.085 22.540C14.362 24.243 14 26.063 14 28Z" fill="url(#gemg)"/></svg>
<div class="tabtxt" style="left:1596.9px">Gem</div>
<div class="abs" style="left:1638.400px;top:4px;width:76.800px;height:36px;border-radius:9px;background:#33333a"></div>
<svg style="left:1647.600px;top:12.500px" width="19" height="19" viewBox="0 0 24 24"><path d="M3.700 9.300v5.400h3.300l4.800 4.200V5.100l-4.800 4.200z" fill="none" stroke="#ececf0" stroke-width="1.900" stroke-linejoin="round"/><path d="M14.200 8.500c1.100 0.900 1.700 2.100 1.700 3.500s-0.600 2.600-1.700 3.500" fill="none" stroke="#ececf0" stroke-width="2.100" stroke-linecap="round"/><path d="M15.200 3.900c2.500 2 3.900 4.900 3.900 8.100s-1.400 6.100-3.900 8.100" fill="none" stroke="#ececf0" stroke-width="1.900" stroke-linecap="round"/></svg>
<div class="t" style="left:1669.400px;top:15.200px;font-size:14px;color:#ececf0;-webkit-text-stroke:0.250px #ececf0">G</div>
<svg style="left:1692.5px;top:17.5px" width="9" height="9" viewBox="0 0 9 9"><path d="M0.7 0.7L8.3 8.3M8.3 0.7L0.7 8.3" stroke="#f0f0f3" stroke-width="1.6" stroke-linecap="butt"/></svg>
<div class="abs" style="left:1733.2px;top:13px;width:18px;height:18px;border-radius:2.5px;background:#2da64f"></div><div class="abs" style="left:1735.7px;top:19px;width:13px;height:2px;background:#fff"></div><div class="abs" style="left:1739.6000000000001px;top:15px;width:2px;height:14px;background:#fff"></div>
<div class="tabtxt" style="left:1760.1px">Prop</div>
<div class="sep" style="left:1799.1px"></div>
<div class="abs" style="left:1814.6px;top:13px;width:18px;height:18px;border-radius:2.5px;background:#2da64f"></div><div class="abs" style="left:1817.1px;top:19px;width:13px;height:2px;background:#fff"></div><div class="abs" style="left:1821.0px;top:15px;width:2px;height:14px;background:#fff"></div>
<div class="tabtxt" style="left:1841.5px">Prop</div>
<div class="sep" style="left:1880.5px"></div>
<svg style="left:1896px;top:16px" width="12" height="12" viewBox="0 0 12 12"><path d="M6 0V12M0 6H12" stroke="#f0f0f3" stroke-width="1.5"/></svg>
<svg style="left:1974px;top:19px" width="12" height="8" viewBox="0 0 12 8"><path d="M0.8 0.8L6 6.300L11.200 0.800" fill="none" stroke="#f0f0f3" stroke-width="1.800"/></svg>
<div class="abs" style="left:1987px;top:5.200px;width:8px;height:8px;border-radius:50%;background:#5b5ef0"></div>
</div>
<div id="toolbar">
<svg style="left:20px;top:15px" width="10" height="16" viewBox="0 0 10 16"><path d="M8.600 0.900L1.300 8L8.600 15.100" fill="none" stroke="#ececf0" stroke-width="1.5"/></svg>
<svg style="left:52.600px;top:15px" width="10" height="16" viewBox="0 0 10 16"><path d="M1.400 0.900L8.700 8L1.400 15.100" fill="none" stroke="#8d8d94" stroke-width="1.5"/></svg>
<svg style="left:82.500px;top:12.700px" width="17" height="17" viewBox="0 0 17 17"><path d="M15.050 8.060A7.100 7.100 0 1 0 13.540 14.060" fill="none" stroke="#ececf0" stroke-width="1.500" stroke-linecap="round"/><circle cx="15.050" cy="8.000" r="1.950" fill="#ececf0"/></svg>
<svg style="left:363.800px;top:14.500px" width="13" height="17" viewBox="0 0 13 17"><path d="M0.800 1.800a1 1 0 0 1 1-1h9.400a1 1 0 0 1 1 1V15.800L6.500 11.500L0.800 15.800Z" fill="none" stroke="#ececf0" stroke-width="1.5" stroke-linejoin="round"/></svg>
<div id="urlbar"></div>
<svg style="left:407px;top:16.500px" width="15" height="13" viewBox="0 0 15 13"><circle cx="3.400" cy="3" r="2.100" fill="none" stroke="#ececf0" stroke-width="1.300"/><path d="M6.300 3H12" stroke="#ececf0" stroke-width="1.300" stroke-linecap="round"/><circle cx="11.200" cy="10" r="2.100" fill="none" stroke="#ececf0" stroke-width="1.300"/><path d="M2 10H8.300" stroke="#ececf0" stroke-width="1.300" stroke-linecap="round"/></svg>
<div class="t" id="url" style="left:438.5px;top:16.000px;font-size:16.700px;color:#ececf0;letter-spacing:0.1px">gemini.google.com<span style="color:#c9c9cf">/app/2888abfdbe2468ca</span></div>
<svg style="left:1494px;top:12.500px" width="14" height="19" viewBox="0 0 14 19"><path d="M4.600 6.600H3.800a2 2 0 0 0-2 2V15.100a2 2 0 0 0 2 2h6.800a2 2 0 0 0 2-2V8.600a2 2 0 0 0-2-2H9.800" fill="none" stroke="#d8d8dc" stroke-width="1.500"/><path d="M7.200 12.700V1.900M4.200 4.700L7.200 1.700L10.200 4.700" fill="none" stroke="#d8d8dc" stroke-width="1.500"/></svg>
<div class="abs" style="left:1519.300px;top:14px;width:1.200px;height:18px;background:#b4b4ba"></div>
<svg style="left:1532px;top:12px" width="18" height="21" viewBox="0 0 18 21"><path d="M9 0.500L12.700 0.500L14.200 2.200L16.200 2L17.300 4.200L16.800 5.800L17.500 7.800L15.500 14.800Q14.800 16.800 12.800 18.200L9 20.600L5.200 18.200Q3.200 16.800 2.500 14.800L0.500 7.800L1.200 5.800L0.700 4.200L1.800 2L3.800 2.200L5.300 0.500Z" fill="#fb542b"/><path d="M9 3.600L12 3.300L14.500 6L13.900 8.200L14.600 9.600L12 12.300L12.200 13.800L9 16L5.800 13.800L6 12.300L3.400 9.600L4.100 8.200L3.500 6L6 3.300Z" fill="#fff"/><path d="M6.300 7.800L8 8.500L7 9.500ZM11.700 7.800L10 8.500L11 9.500ZM9 10L10.200 12L9 12.800L7.800 12Z" fill="#fb542b"/></svg>
<div class="abs" style="left:1543.800px;top:9.700px;width:13.400px;height:13.400px;border-radius:50%;background:#63636d"></div><div class="t" style="left:1547.700px;top:11.700px;font-size:10px;color:#f4f4f6">5</div>
<svg style="left:1568.500px;top:13.500px" width="21" height="18" viewBox="0 0 21 18"><path d="M10.500 0L21 17.800H0Z" fill="#7b2fc0"/><path d="M10.500 0L0 17.800L10.500 11.600Z" fill="#f4501e"/><path d="M10.500 0L21 17.800L10.500 11.600Z" fill="#9e1f63"/><path d="M0 17.800H21L10.500 11.600Z" fill="#6a3fc8"/><path d="M10.500 6.500L14.800 14H6.200Z" fill="#fff"/></svg>
<div class="abs" style="left:1581.500px;top:9.600px;width:13.500px;height:13.500px;border-radius:50%;background:#fa5528"></div><div class="t" style="left:1585.400px;top:11.600px;font-size:10px;color:#fff">1</div>
<svg style="left:1764.900px;top:14.300px" width="18" height="18" viewBox="0 0 18 18"><path d="M6.300 2.800a2.100 2.100 0 0 1 4.200 0v0.700h3.200a1.200 1.200 0 0 1 1.200 1.200v2.900h0.400a2.100 2.100 0 0 1 0 4.200h-0.400v3.400a1.200 1.200 0 0 1-1.200 1.200h-3v-0.900a1.900 1.900 0 0 0-3.800 0v0.900H3.200a1.200 1.200 0 0 1-1.200-1.200v-3.300h0.700a1.900 1.900 0 0 0 0-3.800H2V4.700a1.200 1.200 0 0 1 1.200-1.200h3.100z" fill="none" stroke="#ececf0" stroke-width="1.400" stroke-linejoin="round"/></svg>
<svg style="left:1799.500px;top:14.500px" width="18" height="18" viewBox="0 0 18 18"><path d="M5.700 14.200V3.800L16 1.200V12.200" fill="none" stroke="#ececf0" stroke-width="1.400" stroke-linejoin="round"/><ellipse cx="3.300" cy="14.600" rx="2.500" ry="2.100" fill="none" stroke="#ececf0" stroke-width="1.400"/><ellipse cx="13.600" cy="12.500" rx="2.500" ry="2.100" fill="none" stroke="#ececf0" stroke-width="1.400"/></svg>
<svg style="left:1832.800px;top:15px" width="18" height="16" viewBox="0 0 18 16"><rect x="0.800" y="0.800" width="15.600" height="14.200" rx="1.500" fill="none" stroke="#ececf0" stroke-width="1.500"/><rect x="11.800" y="0.800" width="4.600" height="14.200" fill="#ececf0"/></svg>
<svg style="left:1866.500px;top:14.800px" width="17" height="15.200" viewBox="0 0 18 16"><path d="M1 4.200V13.600a1.400 1.400 0 0 0 1.400 1.400H15.600a1.400 1.400 0 0 0 1.400-1.400V5.600a1.400 1.400 0 0 0-1.400-1.400H2.400A1.400 1.400 0 0 1 1 2.800A1.600 1.600 0 0 1 2.600 1.200H14.200V4" fill="none" stroke="#ececf0" stroke-width="1.400" stroke-linejoin="round"/><path d="M17 7.600H12a1.900 1.900 0 0 0 0 3.800H17" fill="none" stroke="#ececf0" stroke-width="1.400"/></svg>
<svg style="left:1899.500px;top:14px" width="18" height="18" viewBox="0 0 18 18"><path d="M8 1.600C8.900 5 10.800 6.900 14.200 7.800C10.800 8.700 8.900 10.600 8 14C7.100 10.600 5.200 8.700 1.800 7.800C5.200 6.900 7.100 5 8 1.600Z" fill="none" stroke="#ececf0" stroke-width="1.600" stroke-linejoin="round"/><path d="M14 11.200C14.300 13.200 14.900 13.800 16.900 14.100C14.900 14.400 14.300 15 14 17C13.700 15 13.100 14.400 11.100 14.100C13.100 13.800 13.700 13.200 14 11.200Z" fill="#ececf0" stroke="#ececf0" stroke-width="0.500" stroke-linejoin="round"/></svg>
<svg style="left:1933.500px;top:13.500px" width="17" height="19" viewBox="0 0 17 19"><path d="M8.500 1L15.800 3.400V9.200C15.800 13.400 12.800 16.400 8.500 18C4.200 16.400 1.200 13.400 1.200 9.200V3.400Z" fill="none" stroke="#ececf0" stroke-width="1.400" stroke-linejoin="round"/><path d="M4.800 8.200a5.400 5.400 0 0 1 7.400 0M6.200 10.400a3.400 3.400 0 0 1 4.600 0" fill="none" stroke="#ececf0" stroke-width="1.200" stroke-linecap="round"/><circle cx="8.500" cy="12.600" r="0.900" fill="#ececf0"/></svg>
<svg style="left:1966.800px;top:16.700px" width="17" height="14" viewBox="0 0 17 14"><path d="M0 1H17M0 6.600H17M0 12.200H17" stroke="#ececf0" stroke-width="1.400"/></svg>
</div>
</div>
</body></html>
